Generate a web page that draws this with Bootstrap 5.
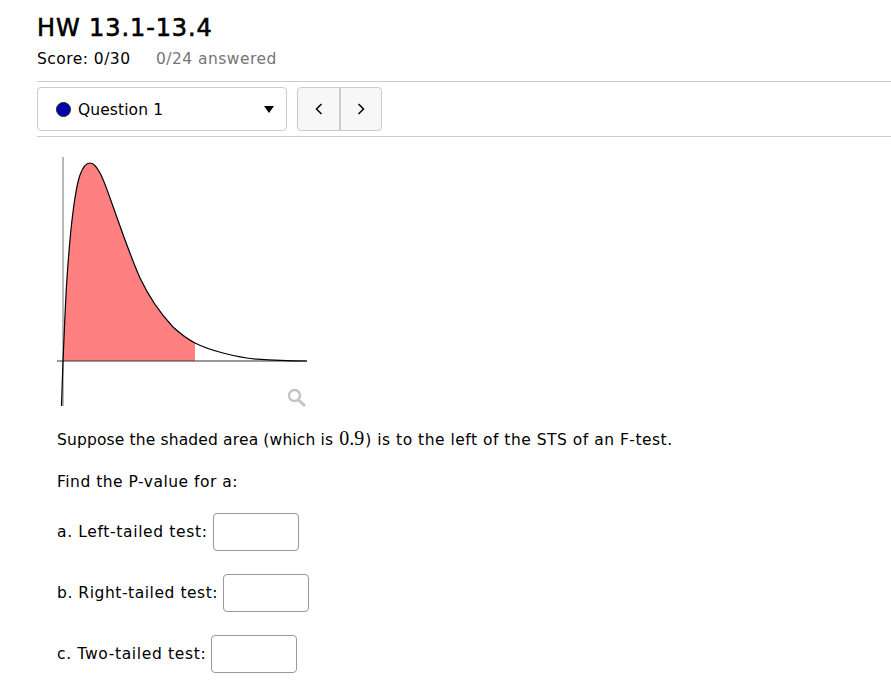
<!DOCTYPE html>
<html lang="en">
<head>
    <meta charset="UTF-8">
    <meta name="viewport" content="width=device-width, initial-scale=1.0">
    <title>HW 13.1-13.4</title>
    <link href="https://cdn.jsdelivr.net/npm/bootstrap@5.3.0/dist/css/bootstrap.min.css" rel="stylesheet">
    <style>
        body {
            background-color: #fff;
            color: #000;
            font-family: "DejaVu Sans", Verdana, sans-serif;
            font-size: 15.5px;
            overflow: hidden;
        }
        .hw-head {
            padding: 11px 0 0 37px;
        }
        .hw-title {
            font-size: 24px;
            line-height: 34px;
            font-weight: 400;
            -webkit-text-stroke: 0.6px #000;
            letter-spacing: 0.9px;
            margin: 0;
        }
        .hw-score {
            line-height: 24px;
            margin-top: 2px;
            height: 34px;
            letter-spacing: 0.47px;
        }
        .hw-answered {
            color: #757575;
            margin-left: 20px;
        }
        .hw-bar {
            margin-left: 37px;
            border-top: 1px solid #ccc;
            border-bottom: 1px solid #ccc;
            padding: 5px 0;
            height: 56px;
        }
        .q-select {
            width: 250px;
            height: 44px;
            border: 1px solid #ccc;
            border-radius: 4px;
            padding: 0 12px 0 18px;
        }
        .q-dot {
            width: 15px;
            height: 15px;
            border-radius: 50%;
            background: #0000a8;
            border: 1px solid #222;
            margin-right: 7px;
        }
        .q-name {
            padding-top: 3px;
            letter-spacing: 0.1px;
        }
        .q-caret {
            width: 0;
            height: 0;
            border-left: 5px solid transparent;
            border-right: 5px solid transparent;
            border-top: 7px solid #000;
        }
        .q-nav {
            width: 85px;
            height: 44px;
            margin-left: 10px;
            border: 1px solid #ccc;
            border-radius: 4px;
            background: #f7f7f7;
        }
        .q-nav > div {
            width: 42px;
        }
        .q-nav > div + div {
            border-left: 2px solid #ccc;
        }
        .q-body {
            padding-left: 57px;
        }
        .q-graph {
            display: block;
            margin: 20px 0 0 -4px;
        }
        .q-line {
            line-height: 24px;
            margin: 0;
        }
        .q-first {
            margin-top: 15px;
        }
        .q-find {
            margin-top: 18px;
            letter-spacing: 0.5px;
        }
        .q-lead {
            letter-spacing: 0.15px;
        }
        .q-rest {
            letter-spacing: 0.5px;
        }
        .q-math {
            font-family: "Liberation Serif", "Times New Roman", serif;
            font-size: 20px;
            letter-spacing: 0;
            margin: 0 1px;
        }
        .q-row {
            height: 38px;
            margin-bottom: 23px;
        }
        .q-row-a {
            margin-top: 19px;
            letter-spacing: 0.65px;
        }
        .q-row-b {
            letter-spacing: 0.55px;
        }
        .q-row-c {
            letter-spacing: 0.66px;
        }
        .q-label {
            padding-top: 2px;
        }
        .q-input {
            width: 86px;
            height: 38px;
            border: 1px solid #999;
            border-radius: 4px;
            margin-left: 5px;
            background: #fff;
            padding: 0 4px;
        }
    </style>
</head>
<body>
    <div class="hw-head">
        <h1 class="hw-title">HW 13.1-13.4</h1>
        <div class="hw-score">Score: 0/30 <span class="hw-answered">0/24 answered</span></div>
    </div>

    <div class="hw-bar d-flex">
        <div class="q-select d-flex align-items-center">
            <span class="q-dot"></span>
            <span class="q-name flex-grow-1">Question 1</span>
            <span class="q-caret"></span>
        </div>
        <div class="q-nav d-flex">
            <div class="d-flex align-items-center justify-content-center">
                <svg width="8" height="12" viewBox="0 0 8 12"><path d="M6.5 1 L1.5 6 L6.5 11" fill="none" stroke="#000" stroke-width="1.5"/></svg>
            </div>
            <div class="d-flex align-items-center justify-content-center flex-grow-1">
                <svg width="8" height="12" viewBox="0 0 8 12"><path d="M1.5 1 L6.5 6 L1.5 11" fill="none" stroke="#000" stroke-width="1.5"/></svg>
            </div>
        </div>
    </div>

    <div class="q-body">
        <!-- svg origin sits at page x=53, y=157 -->
        <svg class="q-graph" width="262" height="254" viewBox="53 157 262 254">
            <path d="M63 361 C64 340 65.3 302.8 67 278 C68.7 253 70.8 229 73 212 C75.2 195 77.2 183 80 175 C82.8 167 86 163 90 163 C94 163 96.7 167.2 100 173 C103.3 178.8 105.5 185.5 110 198 C118 220 129 253 140 278 C149 297 160 313 173 327 C179.3 332.8 186.7 338.7 195 343 L195 361 Z" fill="#ff8080"/>
            <path d="M63 157 V406" stroke="#888" stroke-width="1.2" fill="none"/>
            <path d="M57 361 H307" stroke="#333" stroke-width="1.2" fill="none"/>
            <path d="M61.5 406 L63 361 C64 340 65.3 302.8 67 278 C68.7 253 70.8 229 73 212 C75.2 195 77.2 183 80 175 C82.8 167 86 163 90 163 C94 163 96.7 167.2 100 173 C103.3 178.8 105.5 185.5 110 198 C118 220 129 253 140 278 C149 297 160 313 173 327 C179.3 332.8 186.7 338.7 195 343 C203.3 347.3 212.7 350.3 223 353 C233.3 355.7 243 358 257 359.2 C272 360.4 290 361 307 361" stroke="#000" stroke-width="1.2" fill="none"/>
            <circle cx="294.5" cy="395.5" r="5.5" fill="none" stroke="#c4c4c4" stroke-width="2.4"/>
            <path d="M298.5 400 L305 406" stroke="#c4c4c4" stroke-width="3" fill="none"/>
        </svg>

        <p class="q-line q-first"><span class="q-lead">Suppose the shaded area (which is </span><span class="q-math">0.9</span><span class="q-rest">) is to the left of the STS of an F-test.</span></p>
        <p class="q-line q-find">Find the P-value for a:</p>

        <div class="q-row q-row-a d-flex align-items-center"><span class="q-label">a. Left-tailed test:</span> <input class="q-input" type="text" aria-label="Left-tailed"></div>
        <div class="q-row q-row-b d-flex align-items-center"><span class="q-label">b. Right-tailed test:</span> <input class="q-input" type="text" aria-label="Right-tailed"></div>
        <div class="q-row q-row-c d-flex align-items-center"><span class="q-label">c. Two-tailed test:</span> <input class="q-input" type="text" aria-label="Two-tailed"></div>
    </div>

    <script src="https://cdn.jsdelivr.net/npm/bootstrap@5.3.0/dist/js/bootstrap.bundle.min.js"></script>
</body>
</html>
